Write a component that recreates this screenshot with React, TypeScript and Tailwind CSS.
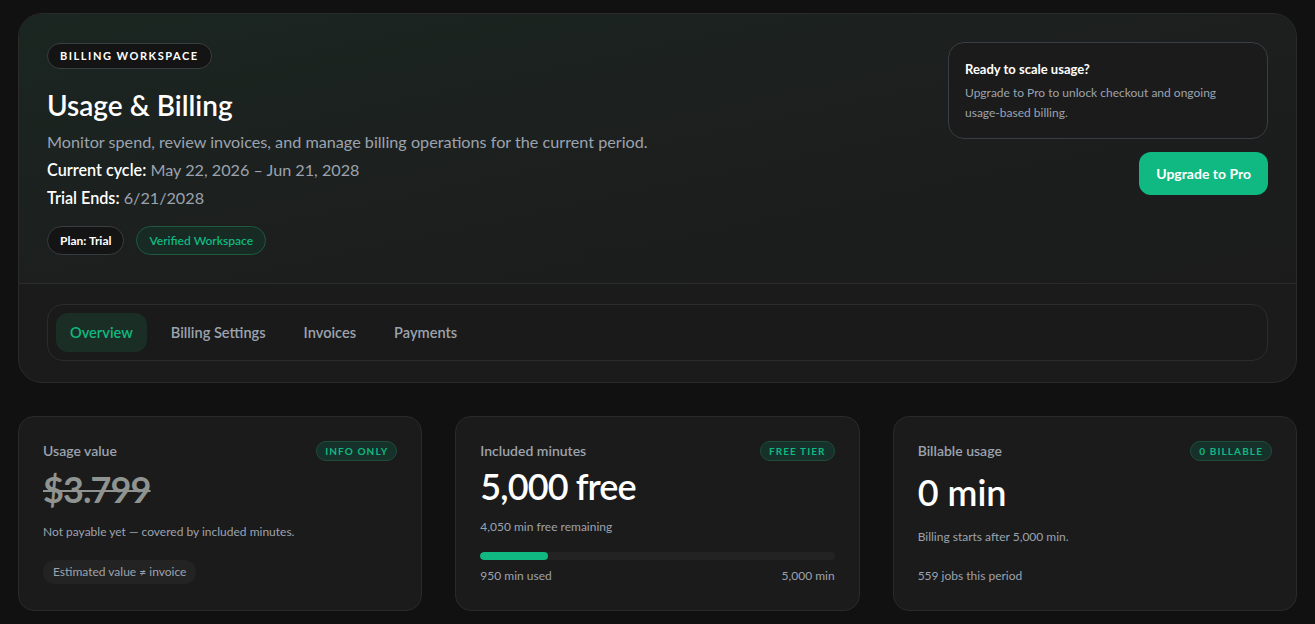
const font = { fontFamily: '"Lato", "Noto Sans", sans-serif' };

function Badge({ children }: { children: React.ReactNode }) {
  return (
    <span className="inline-flex h-5 items-center rounded-full border border-[#1f4d3a] bg-[#16302a] px-[8px] text-[10px] font-bold tracking-[0.11em] text-[#10b981]">
      {children}
    </span>
  );
}

function CardHeader({ title, badge }: { title: string; badge: string }) {
  return (
    <div className="flex h-5 items-center justify-between">
      <span className="text-sm font-semibold text-[#9ca3af]">{title}</span>
      <Badge>{badge}</Badge>
    </div>
  );
}

export default function App() {
  const tabs = ["Overview", "Billing Settings", "Invoices", "Payments"];
  return (
    <div style={font} className="min-h-screen bg-[#111111] px-[18px] pt-[13px] pb-6 text-white">
      {/* Header card */}
      <div className="overflow-hidden rounded-[24px] border border-[#2a2a2a] bg-[#1b1b1b]">
        <div className="flex justify-between border-b border-[#2c2c2c] bg-gradient-to-br from-[#1a2621] via-[#1c1f1e] to-[#1b1b1b] p-7">
          <div className="flex flex-col items-start">
            <span className="mt-px inline-flex h-[26px] items-center rounded-full border border-[#3a3d42] bg-[#141414] px-3 text-[11px] font-bold tracking-[0.14em] text-white">
              BILLING WORKSPACE
            </span>
            <h1 className="mt-[18px] text-[28px] font-semibold leading-9 text-white">Usage &amp; Billing</h1>
            <p className="mt-[5px] text-[16.2px] leading-7 text-[#9ca3af]">
              Monitor spend, review invoices, and manage billing operations for the current period.
            </p>
            <p className="text-[16.2px] leading-7 text-[#9ca3af]">
              <span className="font-semibold text-white">Current cycle:</span> May 22, 2026 – Jun 21, 2028
            </p>
            <p className="text-[16.2px] leading-7 text-[#9ca3af]">
              <span className="font-semibold text-white">Trial Ends:</span> 6/21/2028
            </p>
            <div className="mt-[14px] flex gap-3">
              <span className="inline-flex h-[29px] items-center rounded-full border border-[#3a3d42] bg-[#141414] px-3 text-xs font-bold text-white">
                Plan: Trial
              </span>
              <span className="inline-flex h-[29px] items-center rounded-full border border-[#1f5a40] bg-[#172a23] px-3 text-xs font-semibold text-[#10b981]">
                Verified Workspace
              </span>
            </div>
          </div>
          <div className="flex w-80 flex-col items-end">
            <div className="w-full rounded-2xl border border-[#3a3d45] bg-[#1b1b1b] px-4 pt-4 pb-[15px]">
              <p className="text-[13px] font-bold leading-5 text-white">Ready to scale usage?</p>
              <p className="mt-1 text-xs leading-5 text-[#9ca3af]">
                Upgrade to Pro to unlock checkout and ongoing
                <br />
                usage-based billing.
              </p>
            </div>
            <button className="mt-[13px] h-[43px] rounded-xl bg-[#10b981] px-[17px] text-sm font-bold text-white">
              Upgrade to Pro
            </button>
          </div>
        </div>
        <div className="px-7 pt-5 pb-[21px]">
          <div className="flex gap-2.5 rounded-2xl border border-[#2c2c2c] bg-[#1a1a1a] p-2">
            {tabs.map((t, i) => (
              <button
                key={t}
                className={
                  i === 0
                    ? "h-[39px] rounded-xl bg-[#1a2e26] px-[14px] text-[14.6px] font-semibold text-[#10b981]"
                    : "h-[39px] rounded-xl px-[14px] text-[14.6px] font-semibold text-[#9ca3af]"
                }
              >
                {t}
              </button>
            ))}
          </div>
        </div>
      </div>

      {/* Stat cards */}
      <div className="mt-[33px] grid grid-cols-3 gap-[33px]">
        <div className="rounded-2xl border border-[#2a2a2a] bg-[#1b1b1b] px-6 pt-6 pb-[26px]">
          <CardHeader title="Usage value" badge="INFO ONLY" />
          <p className="mt-2 text-4xl leading-10 font-bold tracking-tight text-[#8f9490] line-through decoration-2">$3.799</p>
          <p className="mt-[15px] text-xs leading-4 text-[#9ca3af]">Not payable yet — covered by included minutes.</p>
          <span className="mt-5 inline-flex h-6 items-center rounded-full bg-[#232323] px-[10px] text-xs text-[#9ca3af]">
            Estimated value ≠ invoice
          </span>
        </div>

        <div className="rounded-2xl border border-[#2a2a2a] bg-[#1b1b1b] px-6 pt-6 pb-[26px]">
          <CardHeader title="Included minutes" badge="FREE TIER" />
          <p className="mt-[5px] text-4xl leading-10 font-semibold tracking-tight text-white">5,000 free</p>
          <p className="mt-[13px] text-xs leading-4 text-[#9ca3af]">4,050 min free remaining</p>
          <div className="mt-[17px] h-2 w-full overflow-hidden rounded-full bg-[#232323]">
            <div className="h-full rounded-full bg-[#10b981]" style={{ width: "19%" }} />
          </div>
          <div className="mt-2 flex justify-between text-xs leading-4 text-[#9ca3af]">
            <span>950 min used</span>
            <span>5,000 min</span>
          </div>
        </div>

        <div className="rounded-2xl border border-[#2a2a2a] bg-[#1b1b1b] px-6 pt-6 pb-[26px]">
          <CardHeader title="Billable usage" badge="0 BILLABLE" />
          <p className="mt-[11px] text-4xl leading-10 font-semibold text-white">0 min</p>
          <p className="mt-[17px] text-xs leading-4 text-[#9ca3af]">Billing starts after 5,000 min.</p>
          <p className="mt-[23px] text-xs leading-4 text-[#9ca3af]">559 jobs this period</p>
        </div>
      </div>
    </div>
  );
}
